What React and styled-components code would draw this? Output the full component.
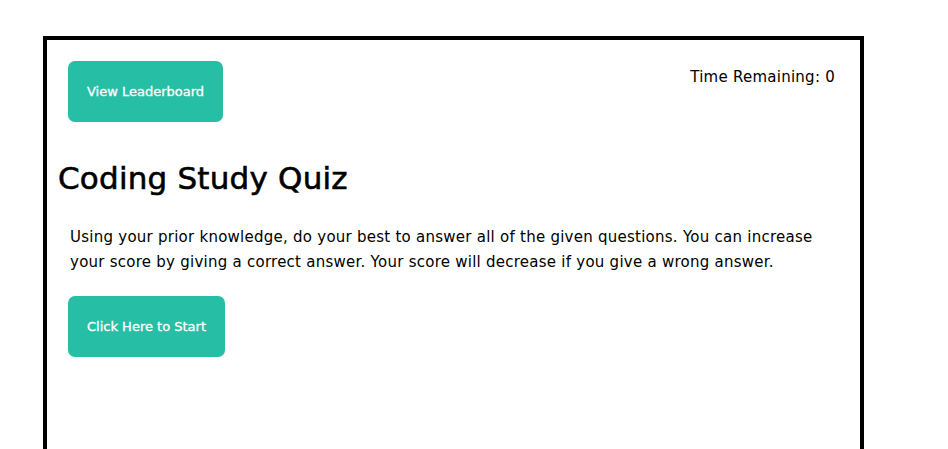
import styled, { createGlobalStyle } from "styled-components"

const GlobalStyle = createGlobalStyle`
    html, body {
        margin: 0;
        padding: 0;
        background: #ffffff;
        font-family: "DejaVu Sans", sans-serif;
        color: #000000;
    }
`;

const App = () => {
    return (
        <>
            <GlobalStyle />
            <Page>
                <Card>
                    <TopBar>
                        <Button>View Leaderboard</Button>
                        <Timer>Time Remaining: 0</Timer>
                    </TopBar>
                    <Title>Coding Study Quiz</Title>
                    <Intro>
                        Using your prior knowledge, do your best to answer all of the given questions. You can increase
                        your score by giving a correct answer. Your score will decrease if you give a wrong answer.
                    </Intro>
                    <Button>Click Here to Start</Button>
                </Card>
            </Page>
        </>
    )
};

const Page = styled.main`
    padding: 36px 0 0 43px;
    height: 449px;
    box-sizing: border-box;
    overflow: hidden;
`;

const Card = styled.section`
    width: 821px;
    min-height: 500px;
    box-sizing: border-box;
    border: 4px solid #000000;
    padding: 21px 25px 0 21px;
`;

const TopBar = styled.div`
    display: flex;
    justify-content: space-between;
    align-items: flex-start;
`;

const Button = styled.button`
    display: block;
    height: 61px;
    padding: 0 19px;
    border: none;
    border-radius: 7px;
    background: #26bfa5;
    color: #ffffff;
    font-family: "DejaVu Sans", sans-serif;
    font-size: 13px;
    font-weight: normal;
    -webkit-text-stroke: 0.3px #ffffff;
    cursor: pointer;
`;

const Timer = styled.div`
    font-size: 15px;
    letter-spacing: 0.25px;
    margin-top: 7px;
`;

const Title = styled.h1`
    margin: 38px 0 0 -10px;
    font-size: 31px;
    font-weight: normal;
    letter-spacing: 0.2px;
    -webkit-text-stroke: 0.6px #000000;
`;

const Intro = styled.p`
    margin: 29px 0 21px 2px;
    font-size: 15px;
    line-height: 25px;
    letter-spacing: 0.25px;
`;

export default App;
